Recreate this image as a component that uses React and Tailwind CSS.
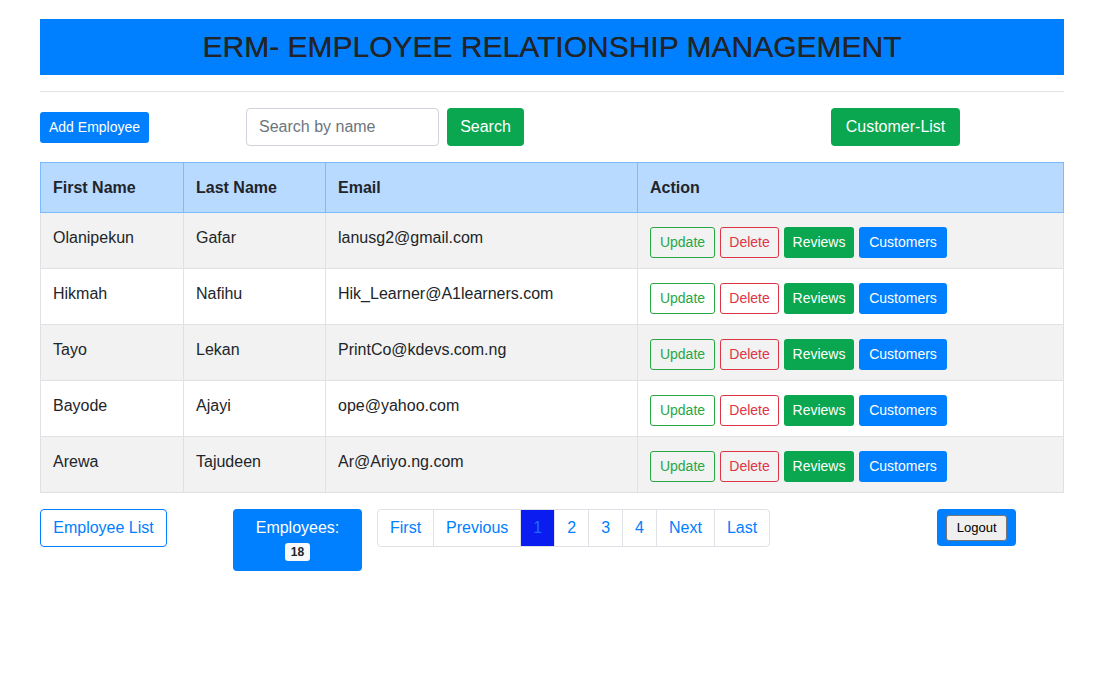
import React from 'react';

const employees = [
  { first: 'Olanipekun', last: 'Gafar', email: 'lanusg2@gmail.com' },
  { first: 'Hikmah', last: 'Nafihu', email: 'Hik_Learner@A1learners.com' },
  { first: 'Tayo', last: 'Lekan', email: 'PrintCo@kdevs.com.ng' },
  { first: 'Bayode', last: 'Ajayi', email: 'ope@yahoo.com' },
  { first: 'Arewa', last: 'Tajudeen', email: 'Ar@Ariyo.ng.com' },
];

const pages = ['First', 'Previous', '1', '2', '3', '4', 'Next', 'Last'];

export default function App() {
  return (
    <div className="min-h-[674px] bg-white text-[#212529] font-['Liberation_Sans',Arial,sans-serif]">
      <div className="w-[1024px] ml-[40px] pt-[19px]">
        {/* header */}
        <div className="h-[56px] bg-[#0080ff] flex items-center justify-center">
          <h2 className="text-[30px] leading-none text-[#212529] [text-shadow:0_0_0.4px_#212529]">ERM- EMPLOYEE RELATIONSHIP MANAGEMENT</h2>
        </div>
        <hr className="mt-[16px] mb-[16px] border-0 border-t border-[#e3e3e3]" />

        {/* toolbar */}
        <div className="flex items-center h-[38px]">
          <div className="w-[206px]">
            <button className="h-[31px] px-[9px] text-[14px] text-white bg-[#0080ff] rounded-[3px]">Add Employee</button>
          </div>
          <input
            placeholder="Search by name"
            className="w-[193px] h-[38px] px-[12px] text-[16px] border border-[#ced4da] rounded-[4px] placeholder:text-[#6c757d] outline-none"
          />
          <button className="ml-[8px] w-[77px] h-[38px] text-[16px] text-white bg-[#0aa650] rounded-[4px]">Search</button>
          <button className="ml-[307px] w-[129px] h-[38px] text-[16px] text-white bg-[#0aa650] rounded-[4px]">Customer-List</button>
        </div>

        {/* table */}
        <table className="mt-[16px] w-[1024px] table-fixed border-collapse text-[16px]">
          <colgroup>
            <col className="w-[143px]" />
            <col className="w-[142px]" />
            <col className="w-[312px]" />
            <col />
          </colgroup>
          <thead>
            <tr className="bg-[#b8daff]">
              {['First Name', 'Last Name', 'Email', 'Action'].map(h => (
                <th key={h} className="text-left font-bold px-[12px] pt-[13px] pb-[12px] leading-[24px] border border-[#7abaff]">{h}</th>
              ))}
            </tr>
          </thead>
          <tbody>
            {employees.map((e, i) => (
              <tr key={e.email} className={i % 2 === 0 ? 'bg-[#f2f2f2]' : 'bg-white'}>
                <td className="align-top px-[12px] pt-[13px] pb-[11px] leading-[24px] border border-[#dee2e6]">{e.first}</td>
                <td className="align-top px-[12px] pt-[13px] pb-[11px] leading-[24px] border border-[#dee2e6]">{e.last}</td>
                <td className="align-top px-[12px] pt-[13px] pb-[11px] leading-[24px] border border-[#dee2e6]">{e.email}</td>
                <td className="align-top px-[12px] pt-[14px] pb-[10px] border border-[#dee2e6]">
                  <div className="flex gap-[5px]">
                    <button className="h-[31px] w-[65px] text-[14px] text-[#28a745] border border-[#28a745] rounded-[3px]">Update</button>
                    <button className="h-[31px] w-[59px] text-[14px] text-[#dc3545] border border-[#dc3545] rounded-[3px]">Delete</button>
                    <button className="h-[31px] w-[70px] text-[14px] text-white bg-[#0aa650] rounded-[3px]">Reviews</button>
                    <button className="h-[31px] w-[88px] text-[14px] text-white bg-[#0080ff] rounded-[3px]">Customers</button>
                  </div>
                </td>
              </tr>
            ))}
          </tbody>
        </table>

        {/* footer row */}
        <div className="mt-[16px] flex items-start">
          <button className="w-[127px] h-[38px] text-[16px] text-[#0080ff] border border-[#0080ff] rounded-[4px]">Employee List</button>
          <div className="ml-[66px] w-[129px] h-[62px] bg-[#0080ff] rounded-[4px] flex flex-col items-center pt-[7px] text-white">
            <span className="text-[16px] leading-[24px]">Employees:</span>
            <span className="mt-[3px] inline-block h-[18px] px-[6px] bg-[#f8f9fa] text-[#212529] text-[12px] font-bold leading-[18px] rounded-[3px]">18</span>
          </div>
          <div className="ml-[15px] flex h-[38px] border border-[#dee2e6] rounded-[4px] overflow-hidden">
            {pages.map((p, i) => (
              <span
                key={p}
                className={
                  'px-[12px] flex items-center text-[16px] ' +
                  (i > 0 ? 'border-l border-[#dee2e6] ' : '') +
                  (p === '1' ? 'bg-[#0a1cf0] text-[#1f6bff]' : 'text-[#0080ff]')
                }
              >
                {p}
              </span>
            ))}
          </div>
          <div className="ml-[167px] w-[79px] h-[37px] bg-[#0080ff] rounded-[4px] flex items-center justify-center">
            <button className="h-[26px] w-[61px] text-[13px] text-black bg-[#efefef] border border-[#767676] rounded-[3px]">Logout</button>
          </div>
        </div>
      </div>
    </div>
  );
}
